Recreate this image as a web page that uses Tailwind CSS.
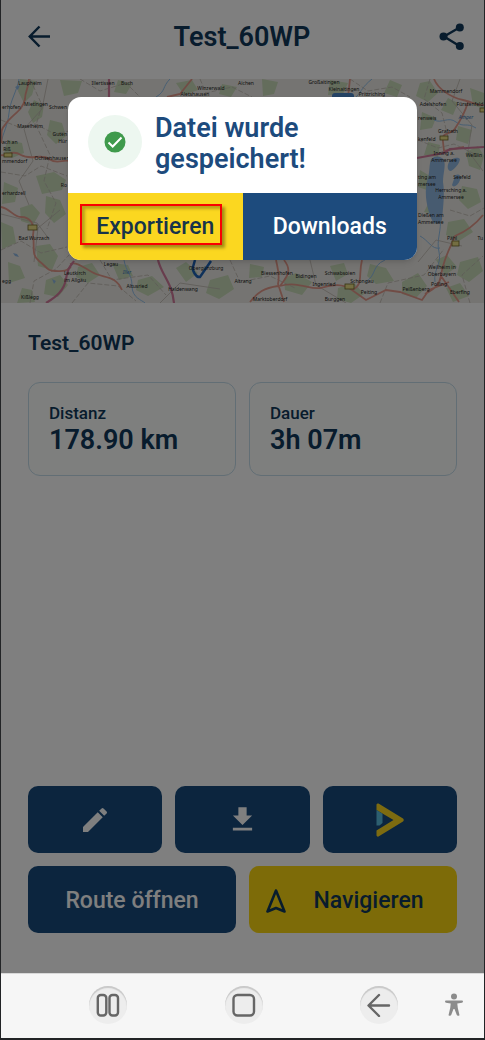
<!DOCTYPE html>
<html lang="de">

<head>
  <meta charset="UTF-8" />
  <meta name="viewport" content="width=device-width, initial-scale=1.0" />
  <title>Test_60WP</title>
  <script src="https://cdn.jsdelivr.net/npm/@tailwindcss/browser@4"></script>
</head>

<body class="bg-[#222426] font-[Roboto,sans-serif]">
  <div class="flex flex-col min-h-screen px-px pb-0.5">

    <!-- App -->
    <div class="relative flex flex-1 flex-col bg-white text-[#10385a]">

      <!-- Header -->
      <header class="flex h-[79px] items-center justify-between pl-[26px] pr-[17px] pb-1.5">
        <button aria-label="Zurück">
          <svg class="size-6" viewBox="0 0 24 24" fill="none" stroke="currentColor" stroke-width="2.500">
            <path d="M23 11.500H3M12.500 1.500L2.800 11.500L12.500 21.500" />
          </svg>
        </button>
        <h1 class="flex-1 pr-1.5 text-center text-[27px] leading-8 font-semibold">Test_60WP</h1>
        <button aria-label="Teilen">
          <svg class="w-7 h-8" viewBox="0 0 28 32" fill="currentColor">
            <path d="M20.500 6.500L5 15.500L20.500 25" fill="none" stroke="currentColor" stroke-width="2.400" />
            <circle cx="20.800" cy="6.500" r="4" />
            <circle cx="4.500" cy="15.500" r="4" />
            <circle cx="20.800" cy="25" r="4" />
          </svg>
        </button>
      </header>

      <!-- Map -->
      <svg class="h-[224px] w-full bg-[#ebe9e4]" viewBox="1 79 483 224" preserveAspectRatio="xMidYMid slice" font-family="Noto Sans, sans-serif" font-size="5" text-anchor="middle" fill="#222">
        <!-- woods -->
        <g fill="#c8dab8">
          <path d="M20 79l16 2-4 14-8 8-6-12zM34 100l10 5-2 12-9 6-5-11zM50 120l12 3 4 13-10 8-9-9zM8 140l14 3 2 10-12 5-8-7zM36 176l18-4 12 8-4 10-20 4zM4 182l14 6-3 14-13 2zM20 208l12-4 8 9-7 12-12-4zM46 196l14 4 6 14-12 9-9-10zM1 222l12 5 3 16-14 6zM36 246l14-2 8 12-6 14-14-4zM8 262l12 4 5 12-16 5zM46 280l14-5 8 10-10 12-14-3zM22 288l10 2 3 12-18 1z" />
          <path d="M60 80l22 1-4 12-14 3zM118 80l14 4-6 10-12-2zM176 83l16-3 6 10-14 5zM222 84l15 3-6 10-12-3zM262 79l16 3-4 12-11 2zM330 80l18 3-5 11-15 1zM390 80l12 5-5 12-13-4zM420 83l10-2 8 12-10 9-12-6zM448 98l10 5-5 12-12-5zM470 88l14 5v16l-11-4zM422 112l14 6-4 10-12 2zM458 126l14 4-4 14-12-4zM428 142l12 3-2 12-14-2zM466 152l12-6 6 10-4 14-11-4zM420 170l10 6-3 14-9-3zM462 186l15 3 4 13-13 7-9-9zM430 200l12 3-4 12-14-3zM448 222l16-3 9 13-14 9-13-6z" />
          <path d="M78 267l14-4 8 12-12 8-12-6zM112 263l16 2 5 11-14 4zM138 280l14-4 12 11-16 9-12-6zM176 268l10-6 12 11-12 9zM210 280l18-5 6 14-15 10-13-6zM250 264l14 3-2 10-13 1zM284 278l12-5 16 9-10 13-17-5zM330 266l14-3 4 11-12 7zM370 264l16 4 8 13-18 3-9-8zM338 288l16-5 10 11-13 9-14-4zM402 282l16-9 9 13-11 12-14-4zM436 260l11-5 10 12-12 8zM460 262l18-5 5 14-14 11-12-7zM446 288l14-5 9 13-16 6z" />
        </g>
        <!-- lakes and rivers -->
        <g fill="#8fb6e0">
          <path d="M431 159c5-4 10-3 13 1 2 6-1 13-1 22 2 12 0 26-1 38-6 8-10 2-12-5-4-11-6-25-2-37 2-8 1-13 3-19z" />
          <path d="M449 162c4-5 9-5 11-3-1 6-6 10-9 12-4 0-4-5-2-9zM455 176c3-3 7-1 5 4-2 6-7 8-8 5zM13 253l4 1 2 3-4-1zM52 279l4 2-2 3zM15 87l5-2-2 5z" />
        </g>
        <g fill="none" stroke="#90bee8" stroke-width="1">
          <path d="M19 79c-2 12-9 22-10 34s-6 20-8 30M170 79c-8 8-4 12-14 18M372 79c-10 8-10 12-16 18M440 218c2 12-4 22-1 34s-6 18-4 30M124 260c2 12 8 14 8 26s10 14 13 17M385 260c-14 6-8 16-20 22M420 236c8 4 12 14 20 12M476 128c-10-6-12 0-20-6s-14 2-22-2" />
        </g>
        <!-- minor roads -->
        <g fill="none" stroke="#bdb6ae" stroke-width="0.800">
          <path d="M1 120l20 8 14-4 20 10 14-3M30 79l12 26-6 20 14 30-6 26 12 22-9 26M1 172l24 4 16-10 26 10M1 250l20-9 20 12 26-6M30 303l4-22 22-12 13-14M72 303l16-20 30 3 18 15M100 260l12 20 36-5 18 20M230 260l10 22 30-6 25 12M380 303l8-20 36-8 20-26M418 140l20 8 16-4 29 14M430 79l-6 20 18 14 6 24M470 303l-8-28 21-19M450 210l20 6 14-8M80 79l20 12 26-8 14 14M200 79l6 14 26-6 20 10M350 79l18 12 24-4 18 10" stroke-dasharray="5 2" />
          <path d="M48 79l-6 30-18 20 9 32-14 20 10 24M1 214l36 9 12 16M60 210l-22 18-4 34M160 303l20-20 40 6M310 260l6 25 30 18M418 262l18-22 26 6M460 79l-8 22 20 24-4 26 15 20" />
        </g>
        <!-- main roads -->
        <g fill="none" stroke="#e2998b" stroke-width="1.800">
          <path d="M29 79c0 8-4 12-4 20-2 12-14 16-20 26-6 6-2 10-4 18M1 155c8 2 10-6 20 0s20-2 28 4 14 0 20 2M1 207c10 2 12 10 20 10 10 0 14 8 12 18 2 12-2 20 6 26 8 6 8 10 16 10s10 1 16-4M70 264c8-3 16 6 26 10s20 2 26 16" />
          <path d="M192 79l-12 15-13 3M350 79l-2 18M434 79c4 10 16 18 29 21s14 6 21 5M468 102c-4 14-10 22-14 28-8 6-12 2-11 12l1 9 20-4M483 215c-8 10-16 16-28 21-6 14-12 24-14 40-2 12-10 14-16 18M276 260c2 10 4 14 2 24l6 18M278 286c-14 2-20 6-28 16M280 286c18-5 30 4 40 2s20-6 32 2l14 10 20-10 14 2 22 8 7-10 20-8M284 260c8 10 4 16-4 26M362 260c-4 16 2 24-10 30M441 276l18 26" />
        </g>
        <g fill="none" stroke="#d07a9b" stroke-width="2.200">
          <path d="M109 79v18M46 303c10-6 18-12 20-24s4-12 8-18M158 260c4 16 14 22 16 43M417 158l27-5 6-4 34-2" />
        </g>
        <path d="M195 260l-2 7c-1 3 3 11 7 10l11-16" fill="none" stroke="#1e62b5" stroke-width="2.500" />
        <!-- road signs -->
        <g fill="#e9dc85" stroke="#6b6426" stroke-width="0.800">
          <rect x="4" y="153" width="8" height="4" />
          <rect x="28" y="225" width="9" height="5" />
          <rect x="440" y="136" width="8" height="4" />
          <rect x="345" y="284" width="9" height="5" />
          <rect x="452" y="241" width="7" height="5" />
          <rect x="480" y="108" width="5" height="4" />
        </g>
        <rect x="332" y="93" width="22" height="9" rx="3" fill="#4b86c8" />
        <!-- places -->
        <text x="30" y="85">Laupheim</text>
        <text x="103" y="85">Illertissen</text>
        <text x="127" y="85">Buch</text>
        <text x="211" y="90">Winzerwald</text>
        <text x="195" y="96">Aletshausen</text>
        <text x="246" y="85">Aichen</text>
        <text x="324" y="84">Großaitingen</text>
        <text x="344" y="91">Kleinaitingen</text>
        <text x="372" y="96">Prittriching</text>
        <text x="446" y="93">Mammendorf</text>
        <text x="433" y="106">Adelshofen</text>
        <text x="470" y="106">Fürstenfeld</text>
        <text x="466" y="119" fill="#3575b5" font-style="italic">Amper</text>
        <text x="418" y="120" text-anchor="start">renweis</text>
        <text x="448" y="133">Grafrath</text>
        <text x="418" y="141" text-anchor="start">kenfeld</text>
        <text x="444" y="155">Inning a.</text>
        <text x="444" y="162">Ammersee</text>
        <text x="482" y="157" text-anchor="end">Weßlin</text>
        <text x="418" y="179" text-anchor="start">ting am</text>
        <text x="418" y="186" text-anchor="start">mersee</text>
        <text x="462" y="179">Seefeld</text>
        <text x="451" y="192">Herrsching a.</text>
        <text x="451" y="199">Ammersee</text>
        <text x="418" y="217" text-anchor="start">Dießen am</text>
        <text x="418" y="224" text-anchor="start">Ammersee</text>
        <text x="452" y="240">Pähl</text>
        <text x="483" y="240" text-anchor="end">Tu</text>
        <text x="2" y="109" text-anchor="start">erhofen</text>
        <text x="36" y="106">Mietingen</text>
        <text x="67" y="109" text-anchor="end">Schwen</text>
        <text x="30" y="128">Maselheim</text>
        <text x="2" y="144" text-anchor="start">ach an</text>
        <text x="7" y="151">Riß</text>
        <text x="67" y="136" text-anchor="end">Guten</text>
        <text x="67" y="143" text-anchor="end">Hür</text>
        <text x="2" y="163" text-anchor="start">mmendorf</text>
        <text x="52" y="160">Ochsenhausen</text>
        <text x="67" y="187" text-anchor="end">Ro</text>
        <text x="2" y="195" text-anchor="start">erhardzell</text>
        <text x="34" y="240">Bad Wurzach</text>
        <text x="75" y="275">Leutkirch</text>
        <text x="75" y="282">im Allgäu</text>
        <text x="30" y="299">Kißlegg</text>
        <text x="2" y="283" text-anchor="start">egg</text>
        <text x="111" y="266">Legau</text>
        <text x="127" y="274" fill="#3575b5" font-style="italic">Iller</text>
        <text x="137" y="288">Altusried</text>
        <text x="183" y="291">Haldenwang</text>
        <text x="206" y="270">Obergünzburg</text>
        <text x="243" y="283">Aitrang</text>
        <text x="277" y="275">Biessenhofen</text>
        <text x="306" y="278">Bidingen</text>
        <text x="340" y="275">Schwabsoien</text>
        <text x="324" y="286">Ingenried</text>
        <text x="362" y="283">Schongau</text>
        <text x="270" y="301">Marktoberdorf</text>
        <text x="335" y="301">Burggen</text>
        <text x="369" y="294">Peiting</text>
        <text x="416" y="291">Peißenberg</text>
        <text x="442" y="269">Weilheim in</text>
        <text x="442" y="276">Oberbayern</text>
        <text x="439" y="286">Polling</text>
        <text x="460" y="294">Eberfing</text>
      </svg>

      <!-- Route details -->
      <main class="flex flex-1 flex-col px-[27px] pb-10">
        <h2 class="mt-[26px] text-[21px] leading-7 font-semibold">Test_60WP</h2>
        <div class="mt-[25px] grid grid-cols-2 gap-[13px]">
          <div class="rounded-xl border border-[#c4dcea] bg-[#fcfffd] px-5 pt-[18px] pb-5">
            <p class="text-[17px] leading-6 font-medium">Distanz</p>
            <p class="text-[27px] leading-[30px] font-semibold">178.90 km</p>
          </div>
          <div class="rounded-xl border border-[#c4dcea] bg-[#fcfffd] px-5 pt-[18px] pb-5">
            <p class="text-[17px] leading-6 font-medium">Dauer</p>
            <p class="text-[27px] leading-[30px] font-semibold">3h 07m</p>
          </div>
        </div>

        <!-- Actions -->
        <div class="mt-auto grid grid-cols-3 gap-[13px] text-white">
          <button aria-label="Bearbeiten" class="flex h-[67px] items-center justify-center rounded-[10px] bg-[#184b7d]">
            <svg class="size-8" viewBox="0 0 24 24" fill="currentColor">
              <path d="M3 17.250V21h3.750L17.810 9.940l-3.750-3.750L3 17.250zM20.710 7.040a1 1 0 0 0 0-1.410l-2.340-2.340a1 1 0 0 0-1.410 0l-1.830 1.830 3.750 3.750 1.830-1.830z" />
            </svg>
          </button>
          <button aria-label="Herunterladen" class="flex h-[67px] items-center justify-center rounded-[10px] bg-[#184b7d]">
            <svg class="size-[33px]" viewBox="0 0 24 24" fill="currentColor">
              <path d="M19 9h-4V3H9v6H5l7 7 7-7zM5 18v2h14v-2H5z" />
            </svg>
          </button>
          <button aria-label="Abspielen" class="flex h-[67px] items-center justify-center rounded-[10px] bg-[#184b7d]">
            <svg class="w-7 h-[34px]" viewBox="0 0 28 34">
              <path d="M.5 1.500q.5-1.500 2-1L27 15.500q1.500 1.500 0 3L2.500 33.500q-1.500.5-2-1V27.500L17.500 17L.5 7z" fill="#fbd720" />
              <path d="M.5 7l6 3.700V20l-3 2.500h-3z" fill="#5bbfe0" />
            </svg>
          </button>
        </div>
        <div class="mt-[13px] grid grid-cols-2 gap-[13px] text-[23px] font-medium">
          <button class="h-[67px] rounded-[10px] bg-[#184b7d] pt-1 text-white">Route öffnen</button>
          <button class="flex h-[67px] items-center rounded-[10px] bg-[#fbd710] pt-1 pl-4 pr-[19px]">
            <svg class="w-[22px] h-[26px]" viewBox="0 0 22 26" fill="none" stroke="currentColor" stroke-width="2.600" stroke-linejoin="round">
              <path d="M11 1.500L2.500 22.500L11 19L19.500 22.500z" />
            </svg>
            <span class="flex-1 pl-3">Navigieren</span>
          </button>
        </div>
      </main>

      <!-- Saved dialog -->
      <div class="absolute inset-0 bg-black/50 px-[67px] pt-[97px]">
        <div role="dialog" aria-labelledby="dialog-title" class="overflow-hidden rounded-[13px] bg-white shadow-md">
          <div class="flex h-24 items-center pl-5">
            <div class="mb-1.5 flex size-[54px] items-center justify-center rounded-full bg-[#edf7f0]">
              <svg class="size-[22px]" viewBox="0 0 22 22">
                <circle cx="11" cy="11" r="10.500" fill="#3f9a4c" />
                <path d="M4.500 11.500l4.200 4L17.500 6.500" fill="none" stroke="#fff" stroke-width="2" />
              </svg>
            </div>
            <h2 id="dialog-title" class="mb-0.5 ml-[13px] flex-1 text-[27px] leading-[31px] font-semibold text-[#1d4b7d]">Datei wurde gespeichert!</h2>
          </div>
          <div class="grid grid-cols-2 text-[23px] font-medium">
            <button class="relative h-[67px] bg-[#fbd720] pt-0.5 text-[#17344a]">
              <span class="absolute top-[11px] right-[21px] bottom-[15px] left-3 border-2 border-[#fa0000] shadow-[3px_3px_3px_rgba(0,0,0,0.35),inset_3px_3px_3px_rgba(0,0,0,0.25)]"></span>
              <span class="relative">Exportieren</span>
            </button>
            <button class="h-[67px] bg-[#1d4b7d] pt-0.5 text-white">Downloads</button>
          </div>
        </div>
      </div>
    </div>

    <!-- System navigation -->
    <nav class="flex h-[65px] items-center border-t border-[#d8d8d8] bg-[#f6f6f6] pr-5 pl-[88px] pb-0.5 text-[#666]">
      <div class="flex flex-1 justify-between">
        <button aria-label="Letzte Apps" class="flex size-[38px] items-center justify-center rounded-full bg-[#ededed] shadow-[inset_0_2px_1px_#c8c8c8]">
          <svg class="size-6" viewBox="0 0 24 24" fill="none" stroke="currentColor" stroke-width="2.400">
            <rect x="1.800" y="2" width="8.500" height="20.500" rx="3" />
            <rect x="13.500" y="2" width="8.500" height="20.500" rx="3" />
          </svg>
        </button>
        <button aria-label="Startseite" class="flex size-[38px] items-center justify-center rounded-full bg-[#ededed] shadow-[inset_0_2px_1px_#c8c8c8]">
          <svg class="size-6" viewBox="0 0 24 24" fill="none" stroke="currentColor" stroke-width="2.400">
            <rect x="1.500" y="2" width="20.500" height="20.500" rx="4" />
          </svg>
        </button>
        <button aria-label="Zurück" class="flex size-[38px] items-center justify-center rounded-full bg-[#ededed] shadow-[inset_0_2px_1px_#c8c8c8]">
          <svg class="size-6" viewBox="0 0 24 24" fill="none" stroke="currentColor" stroke-width="2.400" stroke-linecap="round" stroke-linejoin="round">
            <path d="M22 12.500H2M12 2L1.500 12.500L12 23" />
          </svg>
        </button>
      </div>
      <button aria-label="Bedienungshilfen" class="ml-[46px] text-[#8c8c8c]">
        <svg class="w-5 h-6" viewBox="0 0 20 24" fill="currentColor">
          <circle cx="10" cy="3.500" r="3" />
          <path d="M1 8.500q0-1 1-1h16q1 0 1 1t-1 1.300l-4.700.7.500 4.500 1.700 7.300q-2 1.200-2.700-.3L10.500 16h-1l-2.300 6q-.7 1.500-2.700.3L6.200 15l.5-4.500L2 9.800q-1-.3-1-1.300z" />
        </svg>
      </button>
    </nav>
  </div>
</body>

</html>
